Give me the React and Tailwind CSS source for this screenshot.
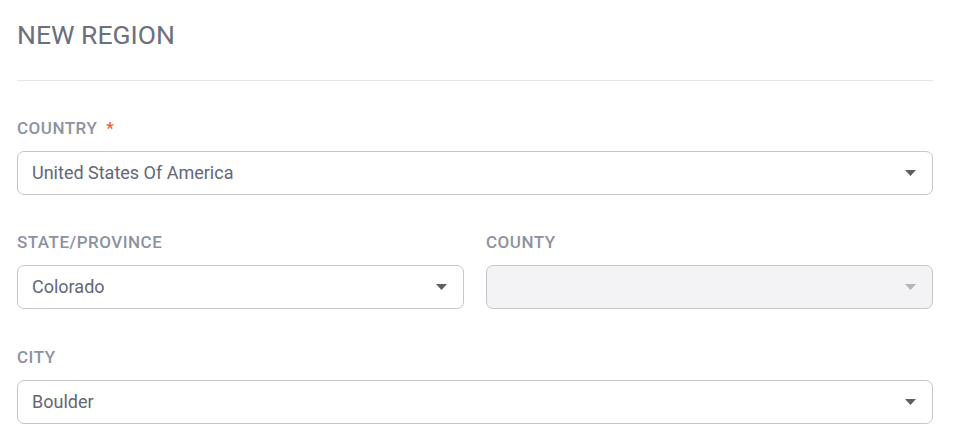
import React from "react";

function Caret({ disabled }) {
  return (
    <svg width="11" height="6" viewBox="0 0 11 6" className="shrink-0">
      <path d="M0 0 L11 0 L5.5 6 Z" fill={disabled ? "#b5b5b8" : "#5f5f62"} />
    </svg>
  );
}

function Select({ value, disabled }) {
  return (
    <div
      className={`flex h-[44px] items-center justify-between rounded-[7px] border border-[#c6c6c9] pl-[14px] pr-[16px] ${
        disabled ? "bg-[#f3f3f5]" : "bg-white"
      }`}
    >
      <span className="text-[18px] leading-[22px] text-[#636775]">{value}</span>
      <Caret disabled={disabled} />
    </div>
  );
}

function Field({ label, required, children, className = "" }) {
  return (
    <div className={`flex flex-col ${className}`}>
      <div className="mb-[13px] flex items-center text-[17px] font-medium leading-[20px] tracking-[0.5px] text-[#8e92a0]">
        <span>{label}</span>
        {required && <span className="ml-[9px] text-[#f0592a]">*</span>}
      </div>
      {children}
    </div>
  );
}

export default function App() {
  return (
    <div
      className="min-h-screen w-full bg-white pl-[17px] pr-[22px] pt-[20px]"
      style={{ fontFamily: "Roboto, 'Noto Sans', sans-serif" }}
    >
      <h1 className="text-[26.5px] leading-[30px] text-[#6c6f7c]">NEW REGION</h1>
      <div className="mt-[30px] h-px bg-[#e6e6e8]" />
      <div className="mt-[37px] flex flex-col gap-[37px]">
        <Field label="COUNTRY" required>
          <Select value="United States Of America" />
        </Field>
        <div className="grid grid-cols-2 gap-[22px]">
          <Field label="STATE/PROVINCE">
            <Select value="Colorado" />
          </Field>
          <Field label="COUNTY">
            <Select value="" disabled />
          </Field>
        </div>
        <Field label="CITY" className="mt-px">
          <Select value="Boulder" />
        </Field>
      </div>
    </div>
  );
}
